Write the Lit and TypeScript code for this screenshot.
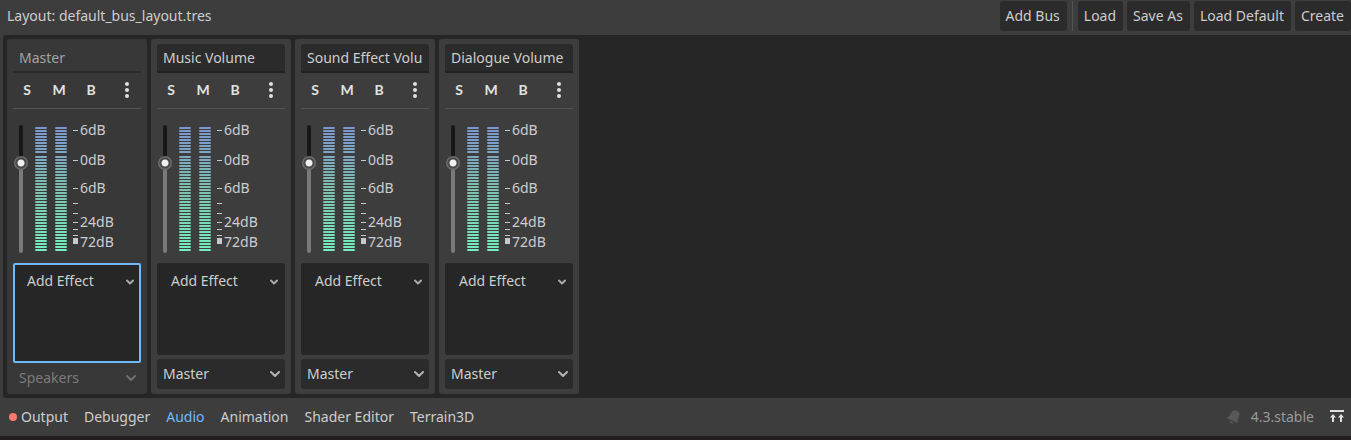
import { LitElement, html, svg, css, nothing } from "lit";
import { customElement, property } from "lit/decorators.js";
import { classMap } from "lit/directives/class-map.js";

const SCALE_LABELS = ["6dB", "0dB", "6dB", "24dB", "72dB"];
const SCALE_TICKS = [10, 40, 68, 83, 93, 102, 109, 115];
const BARS_ABOVE = [...Array(9).keys()].map((i) => 2 + i * 3);
const BARS_BELOW = [...Array(32).keys()].map((i) => 31 + i * 3);

@customElement("audio-bus")
class AudioBus extends LitElement {
  @property() name = "";
  @property() send = "";
  @property({ type: Boolean }) master = false;

  static styles = css`
    :host {
      display: flex;
      box-sizing: border-box;
      width: 140px;
      background: #3d3d3d;
      border-radius: 3px;
      padding: 5px 6px;
    }
    :host([master]) {
      background: #383838;
    }
    .bus {
      display: flex;
      flex-direction: column;
      flex: 1;
      min-width: 0;
    }
    button, input, select {
      font: inherit;
      color: inherit;
      margin: 0;
      border: 0;
      outline: none;
      background: none;
    }
    .name {
      box-sizing: border-box;
      width: 100%;
      height: 29px;
      padding: 0 6px;
      background: #2b2b2b;
      border-bottom: 2px solid #222222;
      border-radius: 3px 3px 0 0;
    }
    .master .name {
      background: none;
      border-bottom-color: #2b2b2b;
      color: #a3a3a3;
    }
    .toggles {
      display: flex;
      align-items: center;
      height: 34px;
      padding-bottom: 1px;
      border-bottom: 1px solid #545454;
    }
    .toggle {
      width: 28px;
      margin-right: 4px;
      padding: 0 0 2px;
      height: 28px;
      font: bold 14px Lato, sans-serif;
      color: #e0e0e0;
    }
    .more {
      display: flex;
      margin-left: auto;
      padding: 6px;
    }
    .levels {
      display: flex;
      padding-top: 11px;
      height: 143px;
    }
    .fader {
      appearance: none;
      writing-mode: vertical-lr;
      direction: rtl;
      width: 16px;
      height: 128px;
      margin-top: 5px;
    }
    .fader::-webkit-slider-runnable-track {
      width: 4px;
      height: 128px;
      border-radius: 2px;
      background: linear-gradient(#171717 38px, #7a7a7a 38px);
    }
    .fader::-webkit-slider-thumb {
      appearance: none;
      width: 14px;
      height: 14px;
      margin-left: -5px;
      border-radius: 7px;
      background: radial-gradient(circle, #f0f0f0 3px, #474747 4px, #474747 5px, #6c6c6c 6px);
    }
    .meter {
      margin-left: 6px;
      flex: none;
    }
    .labels {
      display: grid;
      grid-template-rows: 30px 28px 34px 20px 20px;
      line-height: 20px;
      margin-left: 2px;
    }
    .effects {
      box-sizing: border-box;
      flex: 1;
      background: #262626;
      border: 2px solid #262626;
      border-radius: 3px;
      margin-bottom: 4px;
    }
    .master .effects {
      border-color: #70bafa;
      border-radius: 2px;
    }
    .add {
      display: flex;
      align-items: center;
      justify-content: space-between;
      width: 100%;
      height: 32px;
      padding: 0 3px 0 12px;
    }
    .send {
      display: grid;
      align-items: center;
      height: 30px;
      background: #2b2b2b;
      border-radius: 3px;
    }
    .master .send {
      height: 22px;
      background: none;
      color: #7b7b7b;
    }
    .send select, .send svg {
      grid-area: 1 / 1;
    }
    .send select {
      appearance: none;
      width: 100%;
      height: 100%;
      padding: 0 6px;
      opacity: 1;
    }
    .send svg {
      justify-self: end;
      margin-right: 4px;
      pointer-events: none;
    }
  `;

  render() {
    return html`
      <div class=${classMap({ bus: true, master: this.master })}>
        <input class="name" type="text" aria-label="Bus name" .value=${this.name} ?readonly=${this.master} />
        <div class="toggles">
          <button class="toggle" title="Solo">S</button>
          <button class="toggle" title="Mute">M</button>
          <button class="toggle" title="Bypass">B</button>
          <button class="more" title="Bus options">
            <svg width="16" height="16" fill="#e0e0e0" aria-hidden="true">
              <circle cx="8" cy="2" r="2" /><circle cx="8" cy="8" r="2" /><circle cx="8" cy="14" r="2" />
            </svg>
          </button>
        </div>
        <div class="levels">
          <input class="fader" type="range" min="0" max="100" value="73" aria-label="Volume" />
          ${this.meter()}
          <div class="labels">${SCALE_LABELS.map((l) => html`<span>${l}</span>`)}</div>
        </div>
        <div class="effects">
          <button class="add">
            Add Effect
            <svg width="12" height="12" fill="none" stroke="#a8a8a8" stroke-width="2" stroke-linecap="round" stroke-linejoin="round" aria-hidden="true">
              <path d="M3 5.5l3 3 3-3" />
            </svg>
          </button>
        </div>
        <div class="send">
          <select aria-label="Send to" ?disabled=${this.master}>
            <option>${this.send}</option>
          </select>
          <svg width="12" height="12" fill="none" stroke=${this.master ? "#707070" : "#b5b5b5"} stroke-width="2" stroke-linecap="round" stroke-linejoin="round" aria-hidden="true">
            <path d="M2 4l4 4 4-4" />
          </svg>
        </div>
      </div>
    `;
  }

  meter() {
    const bars = [...BARS_ABOVE, ...BARS_BELOW];
    return html`
      <svg class="meter" width="43" height="132" viewBox="0 -5 43 132" aria-hidden="true">
        <defs>
          <linearGradient id="level" gradientUnits="userSpaceOnUse" x1="0" y1="2" x2="0" y2="126">
            <stop offset="0" stop-color="#7d96d0" />
            <stop offset="0.5" stop-color="#7fc0b0" />
            <stop offset="1" stop-color="#74efc0" />
          </linearGradient>
        </defs>
        <g fill="url(#level)">
          ${[0, 20].map((x) => bars.map((y) => svg`
            <rect x=${x} y=${y} width="12" height="2" opacity="0.7" />
            <rect x=${x + 1} y=${y} width="10" height="2" />`))}
        </g>
        <g fill="#c8c8c8">
          ${SCALE_TICKS.map((y) => svg`<rect x="38" y=${y - 5} width="5" height="1" />`)}
          <rect x="38" y="113" width="5" height="6" />
        </g>
      </svg>
    `;
  }
}

@customElement("app-root")
class AppRoot extends LitElement {
  static styles = css`
    :host {
      display: flex;
      flex-direction: column;
      box-sizing: border-box;
      min-height: 100vh;
      overflow: hidden;
      background: #3d3d3d;
      border-bottom: 4px solid #211f20;
      color: #cdcdcd;
      font: 14px/20px "Noto Sans", sans-serif;
    }
    button {
      font: inherit;
      color: inherit;
      margin: 0;
      border: 0;
      background: none;
    }
    .toolbar {
      display: flex;
      align-items: center;
      gap: 4px;
      height: 30px;
      padding: 1px 0 4px 7px;
    }
    .title {
      flex: 1;
    }
    .action {
      height: 30px;
      padding: 0 7px 0 6px;
      background: #2b2b2b;
      border-radius: 3px;
      white-space: nowrap;
    }
    .divider {
      width: 1px;
      height: 30px;
      margin: 0 1px;
      background: #545454;
    }
    .buses {
      display: flex;
      flex: 1;
      gap: 4px;
      margin-left: 3px;
      padding: 4px;
      background: #262626;
      border-radius: 3px 0 0 3px;
    }
    .footer {
      display: flex;
      align-items: center;
      height: 38px;
      padding: 0 6px 0 1px;
    }
    .tab {
      display: flex;
      align-items: center;
      gap: 4px;
      padding: 0 8px;
      height: 30px;
    }
    .active {
      color: #70bafa;
    }
    .spacer {
      flex: 1;
    }
    .version {
      color: #999999;
      margin: 0 15px 0 9px;
    }
    .icon {
      display: flex;
      padding: 0;
    }
  `;

  render() {
    const tabs = ["Output", "Debugger", "Audio", "Animation", "Shader Editor", "Terrain3D"];
    return html`
      <header class="toolbar">
        <span class="title">Layout: default_bus_layout.tres</span>
        <button class="action">Add Bus</button>
        <span class="divider"></span>
        <button class="action">Load</button>
        <button class="action">Save As</button>
        <button class="action">Load Default</button>
        <button class="action">Create</button>
      </header>
      <main class="buses">
        <audio-bus master name="Master" send="Speakers"></audio-bus>
        <audio-bus name="Music Volume" send="Master"></audio-bus>
        <audio-bus name="Sound Effect Volume" send="Master"></audio-bus>
        <audio-bus name="Dialogue Volume" send="Master"></audio-bus>
      </main>
      <footer class="footer">
        ${tabs.map((t) => html`
          <button class=${classMap({ tab: true, active: t === "Audio" })}>
            ${t === "Output" ? html`<svg width="8" height="8" aria-hidden="true"><circle cx="4" cy="4" r="4" fill="#ff786b" /></svg>` : nothing}${t}
          </button>`)}
        <span class="spacer"></span>
        <button class="icon" title="Notifications">
          <svg width="16" height="16" viewBox="0 0 16 16" fill="#585858" aria-hidden="true">
            <g transform="rotate(25 8 8)">
              <path d="M8 1a5 5 0 0 0-4.500 5v3L1.500 12h13L12.500 9V6A5 5 0 0 0 8 1zM6 13a2 2 0 0 0 4 0z" />
            </g>
          </svg>
        </button>
        <span class="version">4.3.stable</span>
        <button class="icon" title="Expand bottom panel">
          <svg width="16" height="16" viewBox="0 0 16 16" fill="#e0e0e0" aria-hidden="true">
            <path d="M1 1h14v2H1zM4 5l3 3.500H5V13H3V8.500H1zM12 5l3 3.500h-2V13h-2V8.500H9z" />
          </svg>
        </button>
      </footer>
    `;
  }
}
